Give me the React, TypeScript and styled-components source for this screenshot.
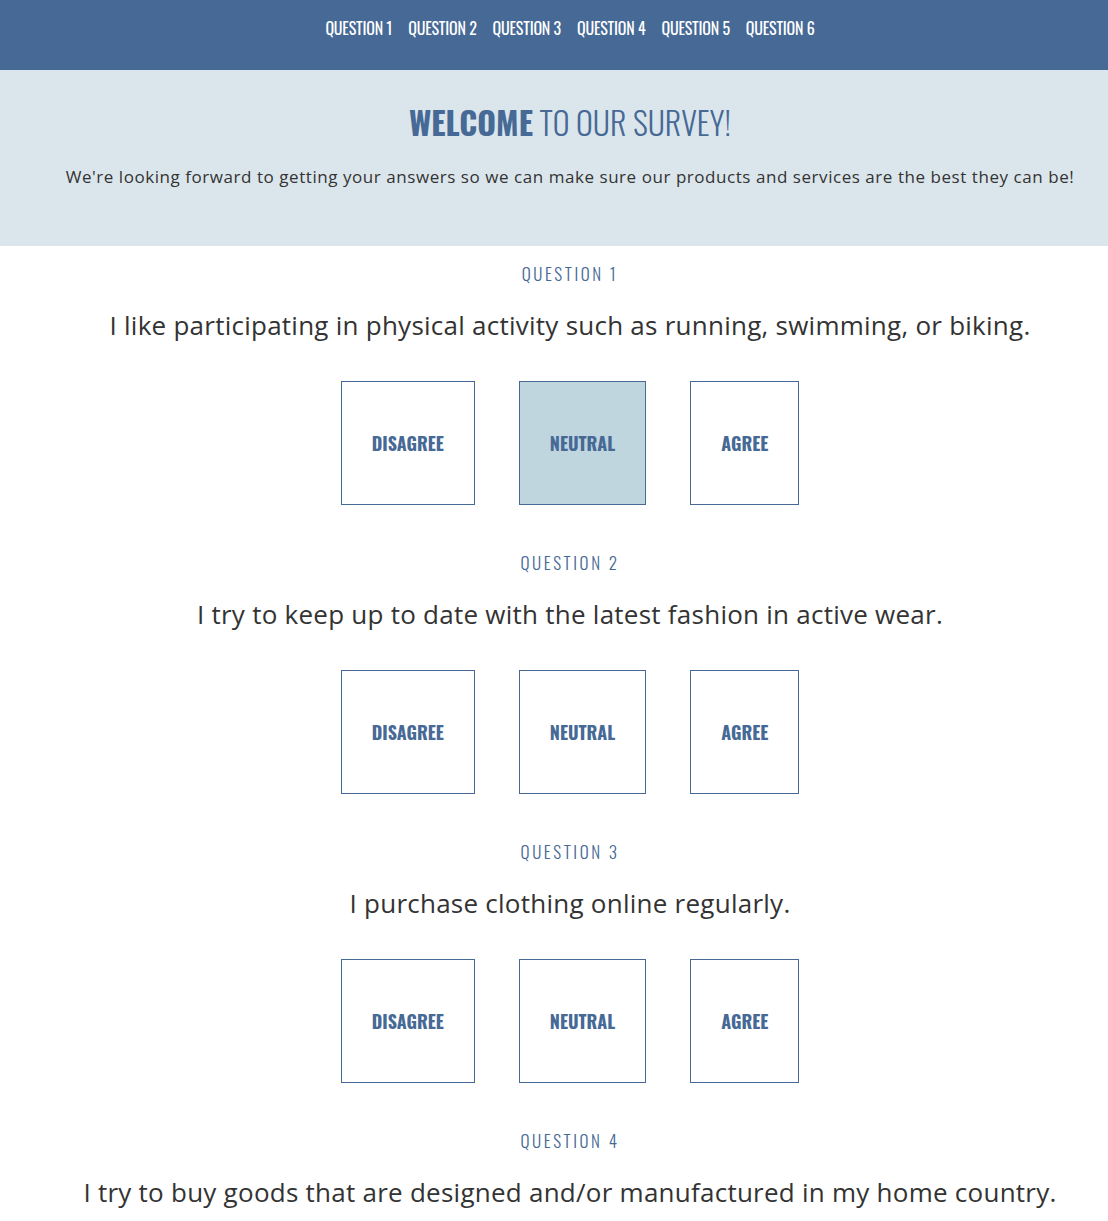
import styled, { createGlobalStyle } from "styled-components";
import { useState } from "react";

const questions = [
  "I like participating in physical activity such as running, swimming, or biking.",
  "I try to keep up to date with the latest fashion in active wear.",
  "I purchase clothing online regularly.",
  "I try to buy goods that are designed and/or manufactured in my home country.",
  "I prefer to shop for clothing in a physical store.",
  "I would recommend our products to a friend.",
];

const options = ["Disagree", "Neutral", "Agree"];

function App() {
  const [answers, setAnswers] = useState<Record<number, string>>({ 0: "Neutral" });

  return (
    <>
      <GlobalStyle />
      <NavBar>
        {questions.map((_, i) => (
          <NavLink key={i} href={`#question-${i + 1}`}>
            Question {i + 1}
          </NavLink>
        ))}
      </NavBar>
      <Hero>
        <Title>
          <strong>Welcome</strong> to our survey!
        </Title>
        <Lead>
          We're looking forward to getting your answers so we can make sure our
          products and services are the best they can be!
        </Lead>
      </Hero>
      <main>
        {questions.map((q, i) => (
          <Question key={i} id={`question-${i + 1}`}>
            <Label>Question {i + 1}</Label>
            <Prompt>{q}</Prompt>
            <Options>
              {options.map((o) => (
                <Option
                  key={o}
                  $selected={answers[i] === o}
                  onClick={() => setAnswers({ ...answers, [i]: o })}
                >
                  {o}
                </Option>
              ))}
            </Options>
          </Question>
        ))}
      </main>
    </>
  );
}

const GlobalStyle = createGlobalStyle`
  body {
    margin: 0;
    background: #ffffff;
    color: #333333;
    font-family: "Open Sans", "Noto Sans", sans-serif;
  }
`;

const condensed = `
  font-family: "Oswald", "DejaVu Sans Condensed", "DejaVu Sans", sans-serif;
  font-stretch: condensed;
  text-transform: uppercase;
`;

// the original content column sits a little right of the page centre
const offset = "padding-left: 32px;";

const NavBar = styled.nav`
  ${offset}
  display: flex;
  justify-content: center;
  gap: 16px;
  height: 70px;
  box-sizing: border-box;
  padding-top: 17px;
  background-color: #466995;
`;

const NavLink = styled.a`
  ${condensed}
  color: #ffffff;
  text-decoration: none;
  font-size: 16px;
  line-height: 22px;
  letter-spacing: -0.2px;
`;

const Hero = styled.header`
  ${offset}
  height: 176px;
  box-sizing: border-box;
  padding-top: 30px;
  background-color: #dbe6ec;
  text-align: center;
`;

const Title = styled.h1`
  ${condensed}
  margin: 0;
  color: #466995;
  font-size: 32px;
  line-height: 44px;
  font-weight: 300;

  strong {
    font-weight: 700;
  }
`;

const Lead = styled.p`
  margin: 21px 0 0;
  font-size: 17px;
  line-height: 24px;
  letter-spacing: 0.55px;
  color: #333333;
`;

const Question = styled.section`
  ${offset}
  display: flex;
  flex-direction: column;
  align-items: center;
  padding-top: 17px;
  padding-bottom: 30px;
  text-align: center;
`;

const Label = styled.h2`
  ${condensed}
  margin: 0;
  color: #466995;
  font-size: 17px;
  line-height: 22px;
  font-weight: 300;
  letter-spacing: 2.6px;
`;

const Prompt = styled.p`
  margin: 22px 0 38px;
  font-size: 26px;
  line-height: 36px;
  letter-spacing: 0.25px;
`;

const Options = styled.div`
  display: flex;
  justify-content: center;
  gap: 44px;
`;

const Option = styled.button<{ $selected?: boolean }>`
  ${condensed}
  padding: 50px 30px;
  border: 1px solid #466995;
  background-color: ${(p) => (p.$selected ? "#c0d6df" : "#ffffff")};
  color: #466995;
  font-size: 18px;
  line-height: 22px;
  font-weight: 700;
  cursor: pointer;

  &:hover {
    background-color: #dbe6ec;
  }
`;

export default App;
